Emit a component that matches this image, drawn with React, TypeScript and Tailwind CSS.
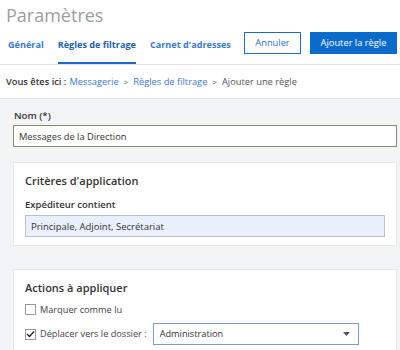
import { useState } from 'react';

export default function App() {
  const [nom, setNom] = useState('Messages de la Direction');
  const [expediteur, setExpediteur] = useState('Principale, Adjoint, Secrétariat');
  const [lu, setLu] = useState(false);
  const [deplacer, setDeplacer] = useState(true);

  return (
    <div className="w-[400px] h-[350px] overflow-hidden bg-[#f3f4f6] text-[#333]" style={{ fontFamily: '"Open Sans", sans-serif' }}>
      <div className="bg-white border-b border-[#e2e4e8]">
        <h1 className="pl-[6px] h-[30px] text-[18px] leading-[30px] text-[#9a9ea5]">Paramètres</h1>
        <div className="flex items-end justify-between pl-[8px] pr-[3px] h-[34px]">
          <div className="flex gap-[14px] h-full">
            <div className="h-full flex items-center pb-[3px] border-b-2 border-transparent text-[9.1px] font-bold whitespace-nowrap text-[#3a78c9]">Général</div>
            <div className="h-full flex items-center pb-[3px] border-b-2 border-[#1b6ac9] text-[9.1px] font-bold whitespace-nowrap text-[#1d5cb0]">Règles de filtrage</div>
            <div className="h-full flex items-center pb-[3px] border-b-2 border-transparent text-[9.1px] font-bold whitespace-nowrap text-[#3a78c9]">Carnet d'adresses</div>
          </div>
          <div className="flex gap-[9px] pb-[10px]">
            <button className="h-[22px] w-[57px] border border-[#1b6ac9] bg-white text-[9.3px] text-[#2a6fc9]">Annuler</button>
            <button className="h-[22px] w-[87px] bg-[#0b6bcb] text-[9.3px] text-white">Ajouter la règle</button>
          </div>
        </div>
      </div>
      <div className="bg-white border-b border-[#e2e4e8] h-[34px] flex items-center pl-[6px] text-[9.3px] whitespace-nowrap">
        <span className="font-semibold text-[#333]">Vous êtes ici :</span>
        <span className="ml-[3px] text-[#3a78c9]">Messagerie</span>
        <span className="mx-[5px] text-[#555] text-[8px]">&gt;</span>
        <span className="text-[#3a78c9]">Règles de filtrage</span>
        <span className="mx-[5px] text-[#555] text-[8px]">&gt;</span>
        <span className="text-[#555]">Ajouter une règle</span>
      </div>

      <div className="pl-[13px] pr-[3px] pt-[10px]">
        <label className="block h-[13px] leading-[13px] text-[9.7px] font-semibold text-[#333] mb-[3px] ml-[1px]">Nom (*)</label>
        <input
          value={nom}
          onChange={e => setNom(e.target.value)}
          className="block w-full h-[22px] border border-[#7d8f6d] bg-white px-[5px] text-[9.3px] text-[#333] outline-none"
        />

        <div className="mt-[15px] bg-white border border-[#e6e8eb] px-[11px] pt-[10px] pb-[8px]">
          <h2 className="h-[15px] leading-[15px] text-[11px] font-semibold text-[#333]">Critères d'application</h2>
          <div className="mt-[10px] h-[13px] leading-[13px] text-[9.5px] font-semibold text-[#333]">Expéditeur contient</div>
          <input
            value={expediteur}
            onChange={e => setExpediteur(e.target.value)}
            className="block mt-[4px] w-full h-[22px] border border-[#b9c3d0] bg-[#e9f0fc] px-[5px] text-[9.5px] text-[#333] outline-none"
          />
        </div>

        <div className="mt-[23px] bg-white border border-[#e6e8eb] px-[11px] pt-[10px] pb-[10px]">
          <h2 className="h-[15px] leading-[15px] text-[11px] font-semibold text-[#333]">Actions à appliquer</h2>
          <label className="mt-[8px] h-[13px] flex items-center gap-[4px] text-[9.2px] text-[#444]">
            <span onClick={() => setLu(!lu)} className="w-[11px] h-[11px] border border-[#999] bg-white flex items-center justify-center">
              {lu && <Check />}
            </span>
            Marquer comme lu
          </label>
          <div className="mt-[7px] flex items-center text-[9.2px] text-[#444]">
            <span onClick={() => setDeplacer(!deplacer)} className="w-[11px] h-[11px] border border-[#999] bg-white flex items-center justify-center">
              {deplacer && <Check />}
            </span>
            <span className="ml-[4px] whitespace-nowrap">Déplacer vers le dossier :</span>
            <div className="ml-[6px] w-[206px] h-[22px] border border-[#7a9cc6] bg-white flex items-center justify-between pl-[6px] pr-[8px] text-[9.2px] text-[#333]">
              <span>Administration</span>
              <svg width="7" height="4" viewBox="0 0 7 4"><path d="M0 0h7L3.5 4z" fill="#555" /></svg>
            </div>
          </div>
        </div>
      </div>
    </div>
  );
}

function Check() {
  return (
    <svg width="9" height="8" viewBox="0 0 9 8">
      <path d="M1 4l2.5 2.5L8 1.5" stroke="#222" strokeWidth="1.3" fill="none" />
    </svg>
  );
}
